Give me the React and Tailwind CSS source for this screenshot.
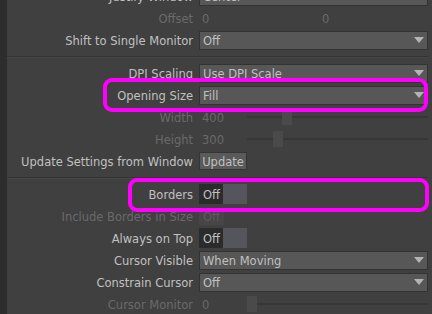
import React from "react";

const Arrow = () => (
  <svg width="10" height="6" viewBox="0 0 10 6" className="shrink-0">
    <path d="M0 0 H10 L5 6 Z" fill="#b4b4b4" />
  </svg>
);

const Label = ({ children, disabled }) => (
  <div
    className={
      "w-[186px] shrink-0 text-right whitespace-nowrap pt-[3px] " +
      (disabled ? "text-[#6a6a6a]" : "text-[#c0c0c0]")
    }
  >
    {children}
  </div>
);

const Row = ({ label, disabled, children }) => (
  <div className="h-[22px] flex items-center shrink-0">
    <Label disabled={disabled}>{label}</Label>
    <div className="ml-[6px] flex-1 flex items-center h-full">{children}</div>
  </div>
);

const Dropdown = ({ value }) => (
  <div className="flex-1 h-[19px] bg-[#575757] border border-[#333333] flex items-center justify-between pl-[3px] pr-[3px] text-[#c0c0c0]">
    <span className="pt-[3px]">{value}</span>
    <Arrow />
  </div>
);

const Slider = ({ value, pos }) => (
  <div className="flex-1 flex items-center h-full">
    <div className="w-[48px] pl-[3px] pt-[3px] text-[#6a6a6a]">{value}</div>
    <div className="relative flex-1 h-full">
      <div className="absolute left-0 right-0 top-[10px] h-[2px] bg-[#373737]" />
      <div
        className="absolute top-[3px] w-[10px] h-[16px] bg-[#4a4a4a]"
        style={{ left: `${pos}px` }}
      />
    </div>
  </div>
);

const Toggle = () => (
  <div className="flex h-[20px]">
    <div className="w-[24px] h-full bg-[#2b2b2b] text-[#c0c0c0] flex items-center pl-[4px] pt-[3px]">
      Off
    </div>
    <div className="w-[24px] h-full bg-[#55555d]" />
  </div>
);

const Separator = () => (
  <div className="h-[11px] shrink-0 pt-[5px]">
    <div className="h-[1px] bg-[#333333]" />
    <div className="h-[1px] bg-[#474747]" />
  </div>
);

export default function App() {
  return (
    <div className="relative w-[432px] h-[314px] overflow-hidden bg-[#404040] flex font-['DejaVu_Sans',sans-serif] text-[11.5px] leading-none">
      <div className="w-[7px] shrink-0 bg-[#2d2d2d]" />
      <div className="flex-1 flex flex-col mt-[-15px] pr-[4px]">
        <Row label="Justify Window">
          <Dropdown value="Center" />
        </Row>
        <Row label="Offset" disabled>
          <div className="w-[120px] pl-[3px] pt-[3px] text-[#6a6a6a]">0</div>
          <div className="pl-[3px] pt-[3px] text-[#6a6a6a]">0</div>
        </Row>
        <Row label="Shift to Single Monitor">
          <Dropdown value="Off" />
        </Row>
        <Separator />
        <Row label="DPI Scaling">
          <Dropdown value="Use DPI Scale" />
        </Row>
        <Row label="Opening Size">
          <Dropdown value="Fill" />
        </Row>
        <Row label="Width" disabled>
          <Slider value="400" pos={35} />
        </Row>
        <Row label="Height" disabled>
          <Slider value="300" pos={26} />
        </Row>
        <Row label="Update Settings from Window">
          <div className="w-[48px] h-[18px] bg-[#5a5a5a] border border-[#353535] text-[#c0c0c0] flex items-center justify-center pt-[3px]">
            Update
          </div>
        </Row>
        <Separator />
        <Row label="Borders">
          <Toggle />
        </Row>
        <Row label="Include Borders in Size" disabled>
          <div className="w-[25px] h-[17px] bg-[#464646] text-[#5c5c5c] flex items-center pl-[4px] pt-[3px]">
            Off
          </div>
        </Row>
        <Row label="Always on Top">
          <Toggle />
        </Row>
        <Row label="Cursor Visible">
          <Dropdown value="When Moving" />
        </Row>
        <Row label="Constrain Cursor">
          <Dropdown value="Off" />
        </Row>
        <Row label="Cursor Monitor" disabled>
          <Slider value="0" pos={0} />
        </Row>
      </div>
      <div className="absolute left-[103px] top-[78px] w-[325px] h-[34px] border-[4px] border-[#ff00ff] rounded-[9px]" />
      <div className="absolute left-[128px] top-[178px] w-[301px] h-[34px] border-[4px] border-[#ff00ff] rounded-[9px]" />
    </div>
  );
}
